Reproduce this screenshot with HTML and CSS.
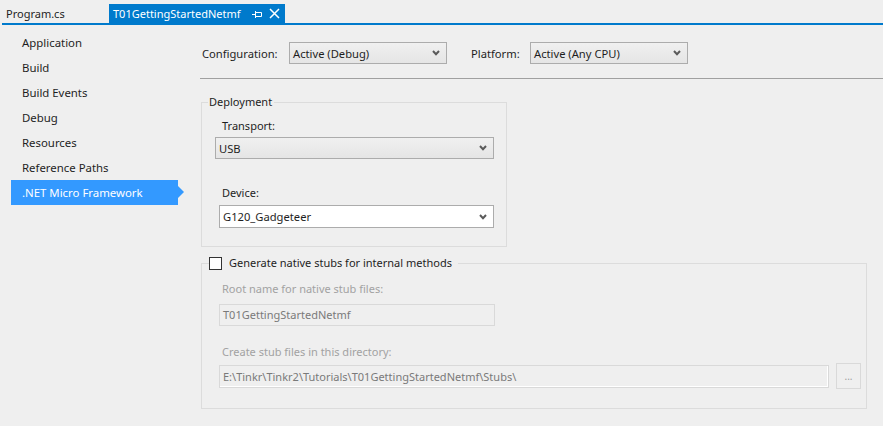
FILE: index.html
```html
<!DOCTYPE html>
<html>
<head>
<meta charset="utf-8">
<link rel="stylesheet" href="styles.css">
</head>
<body>
<div class="tabbar">
  <div class="tab">Program.cs</div>
  <div class="tab active">
    <span class="tab-title">T01GettingStartedNetmf</span>
    <svg class="pin" width="10" height="8" viewBox="0 0 10 8"><path d="M0 4.5H3M3.5 1V8M3.5 2.5H9.5V6.5H3.5" fill="none" stroke="#fff" stroke-width="1"/></svg>
    <svg class="close" width="11" height="11" viewBox="0 0 11 11"><path d="M1 1L10 10M10 1L1 10" stroke="#fff" stroke-width="1.5"/></svg>
  </div>
</div>
<div class="tabline"></div>
<div class="main">
  <nav class="sidebar">
    <div class="item">Application</div>
    <div class="item">Build</div>
    <div class="item">Build Events</div>
    <div class="item">Debug</div>
    <div class="item">Resources</div>
    <div class="item">Reference Paths</div>
    <div class="item selected">.NET Micro Framework</div>
  </nav>
  <section class="content">
    <div class="config-row">
      <span class="lbl cfg">Configuration:</span>
      <div class="combo w158"><span>Active (Debug)</span><svg class="chev" width="8" height="6" viewBox="0 0 8 6"><path d="M1 1L4 4.2L7 1" fill="none" stroke="#5a5a5a" stroke-width="2"/></svg></div>
      <span class="lbl plat">Platform:</span>
      <div class="combo w158"><span>Active (Any CPU)</span><svg class="chev" width="8" height="6" viewBox="0 0 8 6"><path d="M1 1L4 4.2L7 1" fill="none" stroke="#5a5a5a" stroke-width="2"/></svg></div>
    </div>
    <div class="rule"></div>

    <fieldset class="group deploy">
      <legend class="legend">Deployment</legend>
      <div class="group-body deploy-body">
        <div class="field-label">Transport:</div>
        <div class="combo transport"><span>USB</span><svg class="chev" width="8" height="6" viewBox="0 0 8 6"><path d="M1 1L4 4.2L7 1" fill="none" stroke="#5a5a5a" stroke-width="2"/></svg></div>
        <div class="field-label device-label">Device:</div>
        <div class="combo white device"><span>G120_Gadgeteer</span><svg class="chev" width="8" height="6" viewBox="0 0 8 6"><path d="M1 1L4 4.2L7 1" fill="none" stroke="#5a5a5a" stroke-width="2"/></svg></div>
      </div>
    </fieldset>

    <fieldset class="group stubs">
      <legend class="legend check-legend"><span class="checkbox"></span><span>Generate native stubs for internal methods</span></legend>
      <div class="group-body stubs-body">
        <div class="field-label disabled">Root name for native stub files:</div>
        <div class="textbox root">T01GettingStartedNetmf</div>
        <div class="field-label disabled dir-label">Create stub files in this directory:</div>
        <div class="dir-row">
          <div class="textbox path">E:\Tinkr\Tinkr2\Tutorials\T01GettingStartedNetmf\Stubs\</div>
          <div class="browse">...</div>
        </div>
      </div>
    </fieldset>
  </section>
</div>
</body>
</html>
```

FILE: styles.css
```css
* { box-sizing: border-box; }
html, body {
  margin: 0;
  padding: 0;
  background: #efefef;
  width: 883px;
  height: 426px;
  overflow: hidden;
  font-family: "Noto Sans", "DejaVu Sans", sans-serif;
  font-size: 11px;
  color: #1e1e1e;
}

/* Tabs */
.tabbar {
  display: flex;
  align-items: flex-end;
  height: 23px;
  padding-left: 2px;
}
.tab {
  height: 19px;
  line-height: 19px;
  padding-left: 4px;
  width: 107px;
  font-size: 11px;
  color: #1e1e1e;
}
.tab.active {
  width: 176px;
  background: #007acc;
  color: #fff;
  display: flex;
  align-items: center;
}
.tab-title { line-height: 19px; }
.pin { margin-left: 11px; }
.close { margin-left: 7px; }
.tabline {
  margin-left: 2px;
  height: 2px;
  background: #007acc;
}

/* Layout */
.main {
  display: flex;
}
.sidebar {
  width: 200px;
  flex: none;
  padding-top: 5px;
}
.item {
  height: 25px;
  line-height: 26px;
  margin-left: 11px;
  width: 167px;
  padding-left: 11px;
  font-size: 11.4px;
  color: #1e1e1e;
}
.item.selected {
  background: #3399ff;
  color: #fff;
  position: relative;
}
.item.selected::after {
  content: "";
  position: absolute;
  right: -6px;
  top: 6px;
  border-left: 6px solid #3399ff;
  border-top: 6px solid transparent;
  border-bottom: 6px solid transparent;
}

.content {
  flex: 1;
  padding-top: 17px;
}

/* Config row */
.config-row {
  display: flex;
  align-items: center;
  height: 22px;
}
.lbl { font-size: 11.2px; }
.cfg { margin-left: 2px; width: 87px; }
.plat { margin-left: 24px; width: 59px; }

.combo {
  height: 22px;
  border: 1px solid #acacac;
  background: linear-gradient(#f0f0f0, #e5e5e5);
  display: flex;
  align-items: center;
  justify-content: space-between;
  padding-left: 3px;
  padding-right: 6px;
  font-size: 11.2px;
  color: #1e1e1e;
}
.combo.white { background: #fff; }
.w158 { width: 158px; }
.chev { flex: none; }

.rule {
  margin-top: 14px;
  height: 1px;
  background: #a0a0a0;
}

/* Group boxes */
.group {
  margin: 0 0 0 1px;
  padding: 0;
  border: 1px solid #dcdcdc;
  min-width: 0;
}
.legend {
  font-size: 11px;
  line-height: 16px;
  padding: 0 2px 0 1px;
  margin-left: 6px;
  color: #1e1e1e;
}
.deploy {
  width: 306px;
  margin-top: 15px;
}
.group-body {
  padding-left: 13px;
}
.deploy-body {
  padding-top: 8px;
  padding-bottom: 18px;
}
.field-label {
  font-size: 11px;
  line-height: 16px;
  margin-left: 7px;
}
.transport {
  margin-top: 3px;
  width: 279px;
}
.device-label { margin-top: 26px; }
.device {
  margin-top: 4px;
  margin-left: 4px;
  width: 275px;
  height: 23px;
}

.stubs {
  width: 666px;
  margin-top: 8px;
}
.check-legend {
  margin-left: 7px;
  padding: 0 6px 0 0;
  display: flex;
  align-items: center;
}
.checkbox {
  width: 13px;
  height: 13px;
  border: 1px solid #333;
  background: #fff;
  margin-right: 7px;
  flex: none;
}
.stubs-body {
  padding-top: 10px;
  padding-left: 17px;
  padding-bottom: 19px;
}
.stubs-body .field-label { margin-left: 3px; }
.disabled { color: #a2a2a2; }
.textbox {
  height: 23px;
  line-height: 21px;
  border: 1px solid #d9d9d9;
  background: #efefef;
  padding-left: 3px;
  font-size: 11px;
  color: #7a7a7a;
  white-space: nowrap;
}
.root {
  margin-top: 7px;
  width: 276px;
  height: 22px;
  line-height: 20px;
}
.dir-label { margin-top: 18px; }
.dir-row {
  margin-top: 3px;
  display: flex;
  align-items: center;
  height: 26px;
}
.path {
  width: 610px;
  box-shadow: inset -1px -1px 0 #fff;
}
.browse {
  margin-left: 7px;
  width: 25px;
  height: 26px;
  border: 1px solid #d9d9d9;
  background: #efefef;
  color: #a0a0a0;
  font-size: 10px;
  text-align: center;
  line-height: 24px;
}
```
